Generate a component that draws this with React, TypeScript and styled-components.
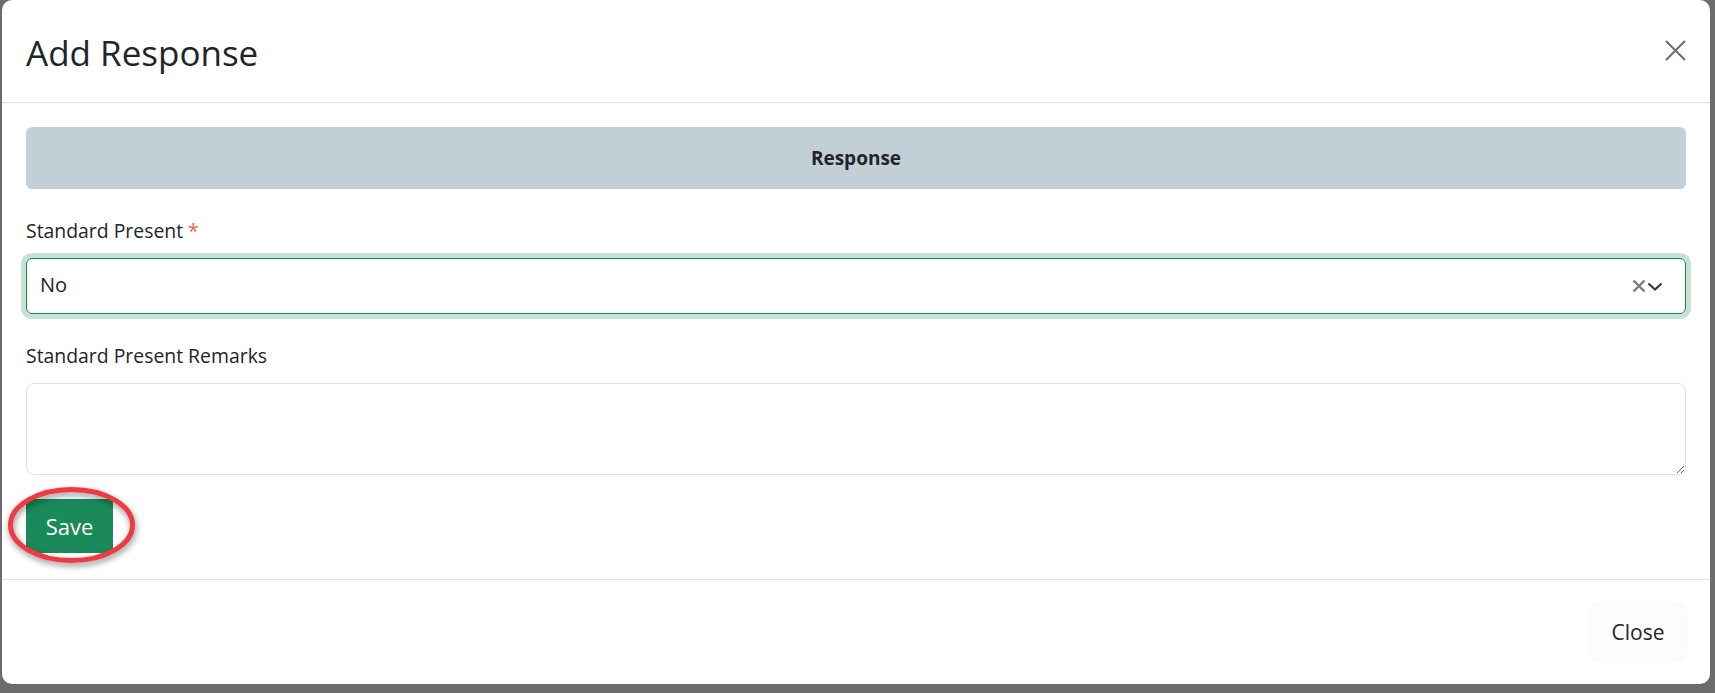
import React from 'react'
import styled, { createGlobalStyle } from 'styled-components'

const GlobalStyle = createGlobalStyle`
  html, body {
    margin: 0;
    padding: 0;
    background: #6c6c6c;
  }
  body {
    font-family: "Open Sans", "Noto Sans", "Liberation Sans", sans-serif;
    color: #212529;
  }
  * { box-sizing: border-box; }
`

const Backdrop = styled.div`
  width: 1715px;
  height: 693px;
  padding: 0 5px 9px 2px;
  overflow: hidden;
`

const Modal = styled.div`
  height: 684px;
  background: #fff;
  border-radius: 10px;
  display: flex;
  flex-direction: column;
`

const Header = styled.div`
  flex-shrink: 0;
  height: 103px;
  padding: 4px 24px 0 24px;
  display: flex;
  align-items: center;
  justify-content: space-between;
  border-bottom: 1px solid #dee2e6;
`

const Title = styled.h5`
  margin: 0;
  font-size: 35px;
  font-weight: 400;
  line-height: 1.2;
  color: #212529;
`

const CloseX = styled.button`
  width: 21px;
  height: 21px;
  padding: 0;
  border: 0;
  background: none;
  display: flex;
  margin-top: -6px;
`

const Body = styled.div`
  flex-shrink: 0;
  padding: 24px 24px 26px 24px;
  display: flex;
  flex-direction: column;
`

const SectionBar = styled.div`
  height: 62px;
  background: #c2cfd7;
  border-radius: 6px;
  display: flex;
  align-items: center;
  justify-content: center;
  font-size: 19px;
  font-weight: 700;
  color: #212529;
`

const Label = styled.label<{ $top: number }>`
  margin-top: ${p => p.$top}px;
  font-size: 19.4px;
  line-height: 30px;
  color: #212529;
`

const Required = styled.span`
  color: #f0614f;
  margin-left: 5px;
`

const SelectBox = styled.div`
  margin-top: 12px;
  height: 56px;
  border: 1px solid #198754;
  border-radius: 6px;
  box-shadow: 0 0 0 5px #c5e2d4;
  display: flex;
  align-items: center;
  padding: 0 22px 0 13px;
  font-size: 20px;
`

const SelectValue = styled.span`
  flex: 1;
  padding-bottom: 3px;
`

const Indicators = styled.div`
  display: flex;
  align-items: center;
  gap: 1px;
`

const TextArea = styled.textarea`
  margin-top: 12px;
  height: 92px;
  border: 1px solid #dee2e6;
  border-radius: 8px;
  font: inherit;
  font-size: 20px;
  padding: 8px 13px;
  resize: vertical;
  outline: none;
`

const SaveWrap = styled.div`
  position: relative;
  margin-top: 24px;
  align-self: flex-start;
`

const SaveButton = styled.button`
  width: 87px;
  height: 54px;
  border: 0;
  border-radius: 4px;
  background: #1b8a5a;
  color: #fff;
  font-family: inherit;
  font-size: 22px;
  display: block;
`

const Highlight = styled.svg`
  position: absolute;
  left: -18px;
  top: -12px;
  width: 127px;
  height: 76px;
  overflow: visible;
  pointer-events: none;
  filter: drop-shadow(1px 3px 3px rgba(0, 0, 0, 0.45));
`

const Footer = styled.div`
  flex: 1;
  border-top: 1px solid #dee2e6;
  padding: 24px;
  display: flex;
  justify-content: flex-end;
  align-items: flex-start;
`

const LightButton = styled.button`
  width: 96px;
  height: 56px;
  border: 0;
  border-radius: 8px;
  background: #fcfcfc;
  box-shadow: 0 0 0 1px #f6f6f6;
  color: #212529;
  font-family: inherit;
  font-size: 21px;
`

export default function App() {
  return (
    <>
      <GlobalStyle />
      <Backdrop>
        <Modal>
          <Header>
            <Title>Add Response</Title>
            <CloseX aria-label="Close">
              <svg width="21" height="21" viewBox="0 0 21 21">
                <path d="M1 1L20 20M20 1L1 20" stroke="#6c6c6c" strokeWidth="2" />
              </svg>
            </CloseX>
          </Header>
          <Body>
            <SectionBar>Response</SectionBar>
            <Label $top={27}>
              Standard Present<Required>*</Required>
            </Label>
            <SelectBox>
              <SelectValue>No</SelectValue>
              <Indicators>
                <svg width="14" height="14" viewBox="0 0 14 14">
                  <path d="M1.5 1.5L12.5 12.5M12.5 1.5L1.5 12.5" stroke="#7b7b7b" strokeWidth="2.4" />
                </svg>
                <svg width="16" height="11" viewBox="0 0 16 11">
                  <path d="M1.5 2.5L8 8.5L14.5 2.5" stroke="#343a40" strokeWidth="2.2" fill="none" />
                </svg>
              </Indicators>
            </SelectBox>
            <Label $top={27}>Standard Present Remarks</Label>
            <TextArea />
            <SaveWrap>
              <SaveButton>Save</SaveButton>
              <Highlight viewBox="0 0 127 76">
                <ellipse cx="63.5" cy="38" rx="61" ry="35.5" fill="none" stroke="#ef3b40" strokeWidth="5" />
              </Highlight>
            </SaveWrap>
          </Body>
          <Footer>
            <LightButton>Close</LightButton>
          </Footer>
        </Modal>
      </Backdrop>
    </>
  )
}
